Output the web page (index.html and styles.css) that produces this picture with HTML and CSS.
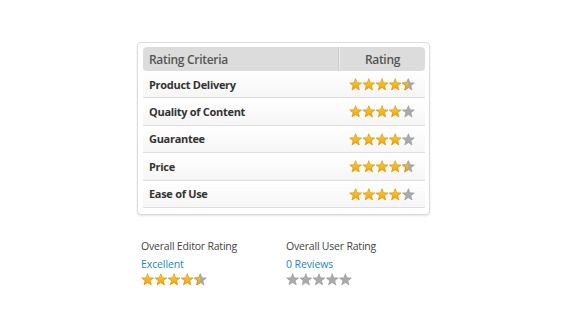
FILE: index.html
```html
<!DOCTYPE html>
<html lang="en">
<head>
    <meta charset="UTF-8">
    <meta name="viewport" content="width=device-width, initial-scale=1.0">
    <title>Review Ratings</title>
    <link rel="stylesheet" href="styles.css">
</head>
<body>
    <!-- shared star shape and fills -->
    <svg class="defs" width="0" height="0">
        <defs>
            <linearGradient id="gold" x1="0" y1="0" x2="0" y2="1">
                <stop offset="0" stop-color="#ffd23a"/>
                <stop offset="1" stop-color="#f0a000"/>
            </linearGradient>
            <clipPath id="half">
                <rect x="0" y="0" width="9.5" height="20"/>
            </clipPath>
            <symbol id="star" viewBox="0 0 20 20">
                <path d="M10 1 L12.35 7.26 L19.03 7.56 L13.8 11.74 L15.58 18.19 L10 14.5 L4.42 18.19 L6.2 11.74 L0.97 7.56 L7.65 7.26 Z"/>
            </symbol>
        </defs>
    </svg>

    <div class="page">
        <div class="ratingBox">
            <div class="ratingHead">
                <div class="criteria">Rating Criteria</div>
                <div class="score">Rating</div>
            </div>

            <div class="ratingRow">
                <div class="criteria">Product Delivery</div>
                <div class="score">
                    <svg class="stars" viewBox="0 0 100 20">
                        <use href="#star" class="on" width="20" height="20"/>
                        <use href="#star" class="on" x="20" width="20" height="20"/>
                        <use href="#star" class="on" x="40" width="20" height="20"/>
                        <use href="#star" class="on" x="60" width="20" height="20"/>
                        <g transform="translate(80 0)">
                            <use href="#star" class="off" width="20" height="20"/>
                            <use href="#star" class="on" width="20" height="20" clip-path="url(#half)"/>
                        </g>
                    </svg>
                </div>
            </div>

            <div class="ratingRow">
                <div class="criteria">Quality of Content</div>
                <div class="score">
                    <svg class="stars" viewBox="0 0 100 20">
                        <use href="#star" class="on" width="20" height="20"/>
                        <use href="#star" class="on" x="20" width="20" height="20"/>
                        <use href="#star" class="on" x="40" width="20" height="20"/>
                        <use href="#star" class="on" x="60" width="20" height="20"/>
                        <use href="#star" class="off" x="80" width="20" height="20"/>
                    </svg>
                </div>
            </div>

            <div class="ratingRow">
                <div class="criteria">Guarantee</div>
                <div class="score">
                    <svg class="stars" viewBox="0 0 100 20">
                        <use href="#star" class="on" width="20" height="20"/>
                        <use href="#star" class="on" x="20" width="20" height="20"/>
                        <use href="#star" class="on" x="40" width="20" height="20"/>
                        <use href="#star" class="on" x="60" width="20" height="20"/>
                        <use href="#star" class="off" x="80" width="20" height="20"/>
                    </svg>
                </div>
            </div>

            <div class="ratingRow">
                <div class="criteria">Price</div>
                <div class="score">
                    <svg class="stars" viewBox="0 0 100 20">
                        <use href="#star" class="on" width="20" height="20"/>
                        <use href="#star" class="on" x="20" width="20" height="20"/>
                        <use href="#star" class="on" x="40" width="20" height="20"/>
                        <use href="#star" class="on" x="60" width="20" height="20"/>
                        <g transform="translate(80 0)">
                            <use href="#star" class="off" width="20" height="20"/>
                            <use href="#star" class="on" width="20" height="20" clip-path="url(#half)"/>
                        </g>
                    </svg>
                </div>
            </div>

            <div class="ratingRow">
                <div class="criteria">Ease of Use</div>
                <div class="score">
                    <svg class="stars" viewBox="0 0 100 20">
                        <use href="#star" class="on" width="20" height="20"/>
                        <use href="#star" class="on" x="20" width="20" height="20"/>
                        <use href="#star" class="on" x="40" width="20" height="20"/>
                        <use href="#star" class="on" x="60" width="20" height="20"/>
                        <use href="#star" class="off" x="80" width="20" height="20"/>
                    </svg>
                </div>
            </div>
        </div>

        <div class="overall">
            <div class="overallCol">
                <div class="overallTitle">Overall Editor Rating</div>
                <a class="overallLink" href="#">Excellent</a>
                <svg class="stars" viewBox="0 0 100 20">
                    <use href="#star" class="on" width="20" height="20"/>
                    <use href="#star" class="on" x="20" width="20" height="20"/>
                    <use href="#star" class="on" x="40" width="20" height="20"/>
                    <use href="#star" class="on" x="60" width="20" height="20"/>
                    <g transform="translate(80 0)">
                        <use href="#star" class="off" width="20" height="20"/>
                        <use href="#star" class="on" width="20" height="20" clip-path="url(#half)"/>
                    </g>
                </svg>
            </div>
            <div class="overallCol">
                <div class="overallTitle">Overall User Rating</div>
                <a class="overallLink" href="#">0 Reviews</a>
                <svg class="stars" viewBox="0 0 100 20">
                    <use href="#star" class="off" width="20" height="20"/>
                    <use href="#star" class="off" x="20" width="20" height="20"/>
                    <use href="#star" class="off" x="40" width="20" height="20"/>
                    <use href="#star" class="off" x="60" width="20" height="20"/>
                    <use href="#star" class="off" x="80" width="20" height="20"/>
                </svg>
            </div>
        </div>
    </div>
</body>
</html>
```

FILE: styles.css
```css
body{
    margin: 0;
    background: #fff;
    font-family: "Open Sans", "Noto Sans", sans-serif;
    color: #333;
}

.defs{
    position: absolute;
    width: 0;
    height: 0;
}

.page{
    padding: 42px 0 0 137px;
}

.ratingBox{
    width: 282px;
    padding: 4px 4px 6px 5px;
    border: 1px solid #dcdcdc;
    border-radius: 4px;
    box-shadow: 0 1px 2px rgba(0,0,0,0.12);
    background: #fff;
}

.ratingHead{
    display: flex;
    height: 24px;
    align-items: stretch;
    background: #dcdcdc;
    border-radius: 4px;
    color: #555;
    font-size: 12px;
    font-weight: 600;
    letter-spacing: -0.3px;
}

.ratingHead .criteria{
    flex: 1;
    display: flex;
    align-items: center;
    padding-left: 6px;
    border-right: 1px solid #c9c9c9;
}

.ratingHead .score{
    width: 85px;
    display: flex;
    align-items: center;
    justify-content: center;
    border-left: 1px solid #ececec;
}

.ratingRow{
    display: flex;
    align-items: center;
    height: 26.4px;
    border-bottom: 1px solid #dedede;
    box-shadow: 0 1px 0 #fff;
    background: linear-gradient(#fff, #f6f6f6);
    font-size: 11px;
    font-weight: 700;
    letter-spacing: -0.3px;
    color: #333;
}

.ratingRow .criteria{
    flex: 1;
    padding-left: 6px;
}

.ratingRow .score{
    width: 87px;
    display: flex;
    justify-content: center;
    padding-top: 1px;
}

.stars{
    display: block;
    width: 66px;
    height: 13.2px;
}

.stars .on{
    fill: url(#gold);
    stroke: #d18a00;
    stroke-width: 0.9;
}

.stars .off{
    fill: #ababab;
    stroke: #969696;
    stroke-width: 0.9;
}

.overall{
    display: flex;
    padding: 23px 0 0 4px;
}

.overallCol{
    width: 145px;
    display: flex;
    flex-direction: column;
    align-items: flex-start;
}

.overallTitle{
    font-size: 10.5px;
    letter-spacing: -0.2px;
    color: #444;
    line-height: 16px;
}

.overallLink{
    margin-top: 2px;
    font-size: 10.5px;
    letter-spacing: -0.1px;
    line-height: 16px;
    color: #1a87c9;
    text-decoration: none;
}

.overallCol .stars{
    margin-top: 1px;
}
```
